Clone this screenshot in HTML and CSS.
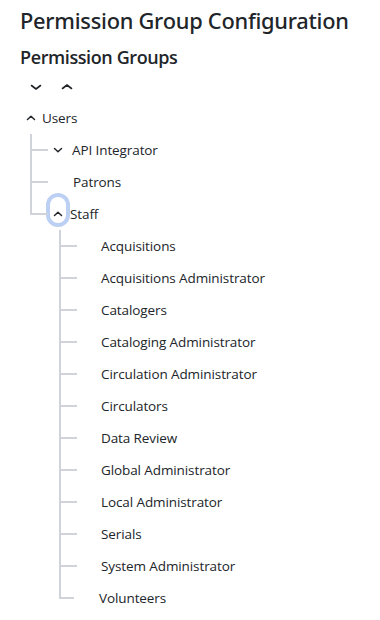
FILE: index.html
```html
<!DOCTYPE html>
<html lang="en">
<head>
<meta charset="utf-8">
<title>Permission Group Configuration</title>
<link rel="stylesheet" href="styles.css">
</head>
<body>
<div class="page">
  <h1 class="title">Permission Group Configuration</h1>
  <h2 class="subtitle">Permission Groups</h2>
  <div class="toolbar">
    <button class="tool-btn" aria-label="Expand all"><svg class="chev-lg" viewBox="0 0 20 20"><path d="M5.5 8.5l4.5 3.5 4.5-3.5"/></svg></button>
    <button class="tool-btn" aria-label="Collapse all"><svg class="chev-lg" viewBox="0 0 20 20"><path d="M5.5 11.5l4.5-3.5 4.5 3.5"/></svg></button>
  </div>
  <ul class="tree">
    <li class="root">
      <div class="row">
        <button class="toggle toggle-root"><svg class="chev" viewBox="0 0 16 16"><path d="M4.5 9.5l3.5-3.2 3.5 3.2"/></svg></button>
        <span class="label label-root">Users</span>
      </div>
      <ul class="children">
        <li class="node">
          <div class="row">
            <button class="toggle"><svg class="chev" viewBox="0 0 16 16"><path d="M4.5 6.5l3.5 3.2 3.5-3.2"/></svg></button>
            <span class="label label-api">API Integrator</span>
          </div>
        </li>
        <li class="node">
          <div class="row"><span class="spacer"></span><span class="label label-leaf">Patrons</span></div>
        </li>
        <li class="node">
          <div class="row">
            <button class="toggle toggle-focus"><svg class="chev" viewBox="0 0 16 16"><path d="M4.5 9.5l3.5-3.2 3.5 3.2"/></svg></button>
            <span class="label">Staff</span>
          </div>
          <ul class="children children-deep">
            <li class="node"><div class="row"><span class="spacer"></span><span class="label">Acquisitions</span></div></li>
            <li class="node"><div class="row"><span class="spacer"></span><span class="label">Acquisitions Administrator</span></div></li>
            <li class="node"><div class="row"><span class="spacer"></span><span class="label">Catalogers</span></div></li>
            <li class="node"><div class="row"><span class="spacer"></span><span class="label">Cataloging Administrator</span></div></li>
            <li class="node"><div class="row"><span class="spacer"></span><span class="label">Circulation Administrator</span></div></li>
            <li class="node"><div class="row"><span class="spacer"></span><span class="label">Circulators</span></div></li>
            <li class="node"><div class="row"><span class="spacer"></span><span class="label">Data Review</span></div></li>
            <li class="node"><div class="row"><span class="spacer"></span><span class="label">Global Administrator</span></div></li>
            <li class="node"><div class="row"><span class="spacer"></span><span class="label">Local Administrator</span></div></li>
            <li class="node"><div class="row"><span class="spacer"></span><span class="label">Serials</span></div></li>
            <li class="node"><div class="row"><span class="spacer"></span><span class="label">System Administrator</span></div></li>
            <li class="node node-last"><div class="row"><span class="spacer"></span><span class="label">Volunteers</span></div></li>
          </ul>
        </li>
      </ul>
    </li>
  </ul>
</div>
</body>
</html>
```
FILE: styles.css
```css
* { box-sizing: border-box; }
html, body { margin: 0; padding: 0; background: #ffffff; }
body {
  font-family: "Open Sans", "Noto Sans", "Liberation Sans", sans-serif;
  color: #212529;
}
.page { padding: 0 20px; }
.title {
  margin: 7px 0 0;
  font-family: "Noto Sans", "Open Sans", sans-serif;
  font-size: 21.8px;
  line-height: 28px;
  font-weight: 500;
  letter-spacing: -0.25px;
}
.subtitle {
  margin: 11px 0 0;
  font-size: 18px;
  line-height: 23px;
  font-weight: 600;
  letter-spacing: -0.4px;
}
.toolbar {
  display: flex;
  height: 30px;
  margin-top: 3px;
  align-items: center;
}
.tool-btn {
  width: 31px;
  height: 30px;
  padding: 0;
  border: 0;
  background: none;
  display: flex;
  align-items: center;
  justify-content: center;
  color: #212529;
}
.chev-lg { width: 20px; height: 20px; fill: none; stroke: currentColor; stroke-width: 1.6; stroke-linecap: round; stroke-linejoin: round; }
.chev { width: 16px; height: 16px; fill: none; stroke: currentColor; stroke-width: 1.5; stroke-linecap: round; stroke-linejoin: round; }
.tree, .children { list-style: none; margin: 0; padding: 0; }
.row {
  display: flex;
  align-items: center;
  height: 32px;
  font-size: 13.5px;
  letter-spacing: -0.1px;
}
.toggle {
  width: 16px;
  height: 26px;
  margin-left: 2px;
  padding: 0;
  border: 0;
  background: none;
  display: flex;
  align-items: center;
  justify-content: center;
  color: #212529;
  border-radius: 9px;
}
.toggle-root { margin-left: 3px; }
.toggle-focus {
  box-shadow: 0 0 0 4px #bcd0f3;
  margin-bottom: 8px;
  padding-top: 8px;
}
.label { margin-left: 4px; white-space: nowrap; }
.label-root { margin-left: 3px; }
.label-api { margin-left: 6px; }
.spacer { width: 24px; flex: none; }
.label-leaf, .children-deep .label { margin-left: 0; }
.label-leaf { margin-left: 1px; }
.children { margin-left: 10px; }
.children-deep { margin-left: 11px; }
.node { position: relative; padding-left: 18px; }
.node::before {
  content: "";
  position: absolute;
  left: 0;
  top: 0;
  bottom: 0;
  width: 2px;
  background: #d0d4da;
}
.node::after {
  content: "";
  position: absolute;
  left: 2px;
  top: 15px;
  width: 16px;
  height: 2px;
  background: #d0d4da;
}
.node:last-child::before { bottom: auto; height: 17px; }
.node-last::after { width: 13px; }
.node-last .spacer { width: 22px; }
```
